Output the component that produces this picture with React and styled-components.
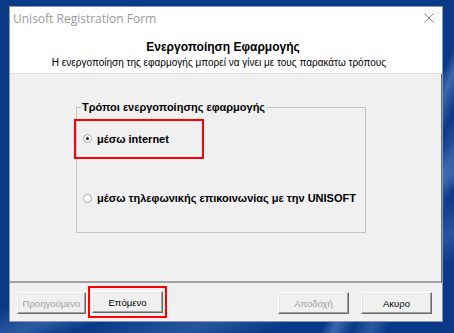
import React from 'react';
import styled, { createGlobalStyle } from 'styled-components';

const GlobalStyle = createGlobalStyle`
  html, body {
    margin: 0;
    padding: 0;
  }
  body {
    width: 454px;
    height: 333px;
    overflow: hidden;
    background:
      linear-gradient(115deg, transparent 0 78%, rgba(120,160,220,0.45) 80%, transparent 83%, rgba(120,160,220,0.3) 86%, transparent 89%),
      linear-gradient(160deg, transparent 0 62%, rgba(110,150,215,0.35) 68%, transparent 72%, rgba(110,150,215,0.3) 80%, transparent 86%),
      #0a3987;
    font-family: "Liberation Sans", Arial, sans-serif;
  }
`;

const Window = styled.div`
  margin: 6px 0 0 9px;
  width: 434px;
  height: 316px;
  box-sizing: border-box;
  border: 1px solid #8a97ad;
  background: #fff;
  display: flex;
  flex-direction: column;
`;

const TitleBar = styled.div`
  height: 22px;
  display: flex;
  align-items: center;
  justify-content: space-between;
  padding: 0 6px 0 3px;
  font-family: "Open Sans", "Noto Sans", sans-serif;
  font-size: 12px;
  color: #9a9a9a;
`;

const Close = styled.svg`
  width: 10px;
  height: 10px;
  margin-right: 2px;
`;

const Header = styled.div`
  height: 45px;
  display: flex;
  flex-direction: column;
  align-items: center;
  padding-right: 6px;
  box-sizing: border-box;
  border-bottom: 1px solid #dedede;
`;

const Heading = styled.div`
  margin-top: 11px;
  font-size: 12px;
  font-weight: bold;
  color: #000;
`;

const Subheading = styled.div`
  margin: 3px 8px 0 0;
  font-size: 10px;
  color: #000;
`;

const Panel = styled.div`
  height: 209px;
  background: #f0f0f0;
  border-right: 1px solid #6e6e6e;
  border-bottom: 2px solid #a0a0a0;
  padding: 27px 0 0 66px;
  box-sizing: border-box;
`;

const Group = styled.fieldset`
  margin: 0;
  width: 290px;
  height: 132px;
  box-sizing: border-box;
  border: 1px solid #c4c4c4;
  padding: 0;
  display: flex;
  flex-direction: column;
`;

const Legend = styled.legend`
  padding: 0 1px;
  margin-left: 4px;
  font-size: 11px;
  font-weight: bold;
  color: #000;
`;

const Highlight = styled.div`
  border: 2px solid #f00;
  width: ${p => (p.$w ? `${p.$w}px` : 'auto')};
  height: ${p => (p.$h ? `${p.$h}px` : 'auto')};
  box-sizing: border-box;
  margin: ${p => p.$margin};
  padding: ${p => p.$padding};
  display: flex;
  align-items: ${p => p.$align || 'stretch'};
  align-self: flex-start;
`;

const Option = styled.label`
  display: flex;
  align-items: center;
  gap: 5px;
  font-size: 11px;
  font-weight: bold;
  color: #000;
  margin: ${p => p.$margin || 0};
`;

const Radio = styled.span`
  width: 9px;
  height: 9px;
  border-radius: 50%;
  border: 1px solid #a8a8a8;
  background: #fff;
  box-sizing: border-box;
  display: flex;
  align-items: center;
  justify-content: center;
  &::after {
    content: '';
    width: 3px;
    height: 3px;
    border-radius: 50%;
    background: ${p => (p.$checked ? '#111' : 'transparent')};
  }
`;

const Footer = styled.div`
  flex: 1;
  background: #f0f0f0;
  display: flex;
  align-items: flex-start;
  padding: 1px 10px 0 7px;
`;

const Button = styled.button`
  width: ${p => p.$w || 71}px;
  height: 22px;
  box-sizing: border-box;
  margin: ${p => p.$margin || 0};
  background: #f0f0f0;
  border: 1px solid;
  border-color: #fff #696969 #696969 #fff;
  box-shadow: inset -1px -1px 0 #a0a0a0, inset 1px 1px 0 #e3e3e3;
  font-family: "Liberation Sans", Arial, sans-serif;
  font-size: 9.5px;
  color: ${p => (p.disabled ? '#a0a0a0' : '#000')};
  padding: 0;
`;

const Spacer = styled.div`
  flex: 1;
`;

export default function App() {
  return (
    <>
      <GlobalStyle />
      <Window>
        <TitleBar>
          <span>Unisoft Registration Form</span>
          <Close viewBox="0 0 10 10">
            <path d="M0.5 0.5 L9.5 9.5 M9.5 0.5 L0.5 9.5" stroke="#8c8c8c" strokeWidth="1" />
          </Close>
        </TitleBar>
        <Header>
          <Heading>Ενεργοποίηση Εφαρμογής</Heading>
          <Subheading>Η ενεργοποίηση της εφαρμογής μπορεί να γίνει με τους παρακάτω τρόπους</Subheading>
        </Header>
        <Panel>
          <Group>
            <Legend>Τρόποι ενεργοποίησης εφαρμογής</Legend>
            <Highlight $w={130} $h={40} $align="center" $margin="6px 0 0 -3px" $padding="0 0 1px 0">
              <Option $margin="0 0 0 7px">
                <Radio $checked />
                μέσω internet
              </Option>
            </Highlight>
            <Option $margin="33px 0 0 6px">
              <Radio />
              μέσω τηλεφωνικής επικοινωνίας με την UNISOFT
            </Option>
          </Group>
        </Panel>
        <Footer>
          <Button disabled $w={69} $margin="8px 0 0 0">Προηγούμενο</Button>
          <Highlight $margin="2px 0 0 2px" $padding="3px 2px">
            <Button>Επόμενο</Button>
          </Highlight>
          <Spacer />
          <Button disabled $margin="8px 12px 0 0">Αποδοχή</Button>
          <Button $margin="8px 0 0 0">Ακυρο</Button>
        </Footer>
      </Window>
    </>
  );
}
